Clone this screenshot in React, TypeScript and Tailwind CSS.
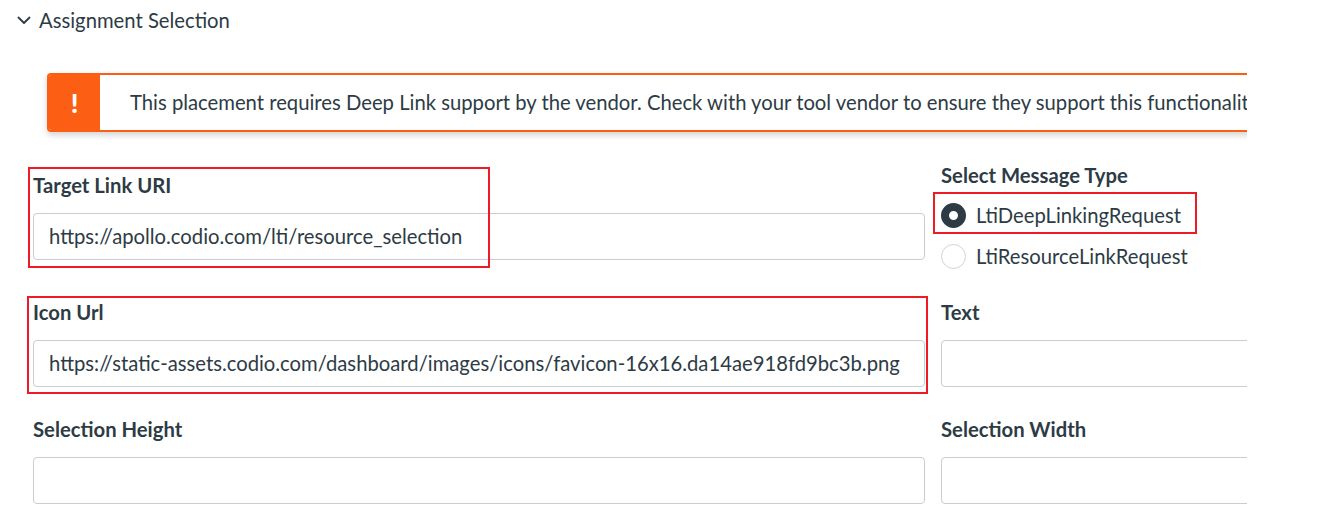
import React from "react";

const font = { fontFamily: "Lato, 'Noto Sans', sans-serif" };

function Label({ children }: { children: React.ReactNode }) {
  return <div className="h-[28px] leading-[28px] text-[20.25px] font-bold text-[#2d3b45] whitespace-nowrap">{children}</div>;
}

function Field({ value }: { value?: string }) {
  return (
    <div className="mt-[14px] h-[47px] border border-[#c7cdd1] rounded-[4px] bg-white flex items-center pl-[15px] pr-[12px] overflow-hidden">
      <span className="text-[20.25px] text-[#2d3b45] whitespace-nowrap">{value}</span>
    </div>
  );
}

function Radio({ checked, label }: { checked?: boolean; label: string }) {
  return (
    <div className="h-[28px] flex items-center gap-[10px]">
      {checked ? (
        <span className="w-[25px] h-[25px] rounded-full border-[8px] border-[#2d3b45] bg-white shrink-0" />
      ) : (
        <span className="w-[25px] h-[25px] rounded-full border border-[#d0d5d8] bg-white shrink-0" />
      )}
      <span className="text-[20.25px] text-[#2d3b45] whitespace-nowrap">{label}</span>
    </div>
  );
}

export default function App() {
  return (
    <div className="w-[1326px] h-[532px] bg-white overflow-hidden" style={font}>
      <div className="w-[1247px] overflow-hidden">
        {/* Header */}
        <div className="pt-[6px] pl-[17px] flex items-center h-[34px]">
          <svg width="14" height="9" viewBox="0 0 14 9" className="shrink-0">
            <polyline points="1.5,1.5 7,7 12.5,1.5" fill="none" stroke="#2d3b45" strokeWidth="1.8" strokeLinecap="round" strokeLinejoin="round" />
          </svg>
          <span className="ml-[8px] text-[20.25px] leading-[28px] text-[#2d3b45] whitespace-nowrap">Assignment Selection</span>
        </div>

        {/* Alert */}
        <div className="mt-[39px] ml-[47px] w-[1300px] h-[59px] flex border-2 border-[#fc5e13] rounded-[4px] bg-white shadow-[0_3px_6px_rgba(0,0,0,0.18)] overflow-hidden">
          <div className="w-[51px] bg-[#fc5e13] flex items-center justify-center shrink-0">
            <span className="text-white font-black text-[27px] leading-none">!</span>
          </div>
          <div className="pl-[30px] flex items-center text-[20.25px] text-[#2d3b45] whitespace-nowrap">
            This placement requires Deep Link support by the vendor. Check with your tool vendor to ensure they support this functionality.
          </div>
        </div>

        {/* Form */}
        <div className="mt-[29px] pl-[33px] flex flex-col gap-[28px]">
          {/* Row 1 */}
          <div className="flex items-center gap-[16px]">
            <div className="relative w-[892px] shrink-0">
              <Label>Target Link URI</Label>
              <Field value="https://apollo.codio.com/lti/resource_selection" />
              <div className="absolute left-[-5px] top-[-4px] w-[462px] h-[101px] border-2 border-[#ee1b24] pointer-events-none" />
            </div>
            <div className="w-[420px] shrink-0">
              <Label>Select Message Type</Label>
              <div className="mt-[12px] flex flex-col gap-[13px]">
                <div className="relative">
                  <Radio checked label="LtiDeepLinkingRequest" />
                  <div className="absolute left-[-8px] top-[-9px] w-[264px] h-[42px] border-2 border-[#ee1b24] pointer-events-none" />
                </div>
                <Radio label="LtiResourceLinkRequest" />
              </div>
            </div>
          </div>

          {/* Row 2 */}
          <div className="flex items-center gap-[16px]">
            <div className="relative w-[892px] shrink-0">
              <Label>Icon Url</Label>
              <Field value="https://static-assets.codio.com/dashboard/images/icons/favicon-16x16.da14ae918fd9bc3b.png" />
              <div className="absolute left-[-6px] top-[-2px] w-[901px] h-[98px] border-2 border-[#ee1b24] pointer-events-none" />
            </div>
            <div className="w-[420px] shrink-0">
              <Label>Text</Label>
              <Field />
            </div>
          </div>

          {/* Row 3 */}
          <div className="flex items-center gap-[16px]">
            <div className="w-[892px] shrink-0">
              <Label>Selection Height</Label>
              <Field />
            </div>
            <div className="w-[420px] shrink-0">
              <Label>Selection Width</Label>
              <Field />
            </div>
          </div>
        </div>
      </div>
    </div>
  );
}
